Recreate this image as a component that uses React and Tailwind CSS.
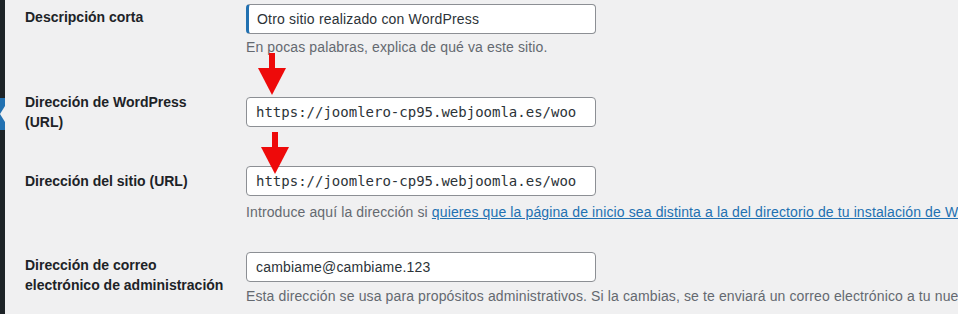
import React from 'react';

const sans = { fontFamily: '"Liberation Sans", Arial, sans-serif' };

const Arrow = ({ className }) => (
  <div className={`absolute flex flex-col items-center ${className}`}>
    <div className="w-[6px] h-[15px] bg-[#ee0a0a]" />
    <svg width="28" height="27" viewBox="0 0 28 27" className="block">
      <polygon points="0,0 28,0 14,27" fill="#ee0a0a" />
    </svg>
  </div>
);

const TextInput = ({ value, mono, focused }) => (
  <div
    className={`w-[350px] h-[30px] bg-white rounded-[4px] border border-[#8c8f94] flex items-center px-[9px] text-[#2c3338] whitespace-nowrap overflow-hidden ${
      focused ? 'border-l-[3px] border-l-[#2271b1] pl-[8px]' : ''
    } ${mono ? 'font-["DejaVu_Sans_Mono",monospace] text-[14px]' : 'text-[14px] tracking-[0.18px]'}`}
  >
    {value}
  </div>
);

const Desc = ({ children, className = 'mt-[4px]' }) => (
  <p className={`${className} text-[14px] tracking-[0.12px] leading-[20px] text-[#646970] whitespace-nowrap`}>{children}</p>
);

export default function App() {
  return (
    <div className="relative w-[958px] h-[314px] overflow-hidden bg-[#f0f0f1] flex" style={sans}>
      {/* admin menu edge */}
      <div className="w-[5px] flex flex-col shrink-0">
        <div className="h-[98px] bg-[#1d2327]" />
        <div className="relative h-[32px] bg-[#2271b1]">
          <div className="absolute right-0 top-[8px] w-0 h-0 border-y-[8px] border-y-transparent border-r-[5px] border-r-[#f0f0f1]" />
        </div>
        <div className="flex-1 bg-[#1d2327]" />
      </div>

      <div className="pl-[20px] flex flex-col">
        {/* Descripción corta */}
        <div className="flex pt-[4px]">
          <label className="w-[221px] mt-[3px] text-[14px] leading-[20px] font-bold text-[#1d2327]">
            Descripción corta
          </label>
          <div>
            <TextInput value="Otro sitio realizado con WordPress" focused />
            <Desc className="mt-[3px]">En pocas palabras, explica de qué va este sitio.</Desc>
          </div>
        </div>

        {/* Dirección de WordPress */}
        <div className="flex pt-[35px]">
          <label className="w-[221px] text-[14px] leading-[20px] font-bold text-[#1d2327]">
            Dirección de WordPress
            <br />
            (URL)
          </label>
          <div className="mt-[5px]">
            <TextInput value="https://joomlero-cp95.webjoomla.es/woo" mono />
          </div>
        </div>

        {/* Dirección del sitio */}
        <div className="flex pt-[34px]">
          <label className="w-[221px] mt-[5px] text-[14px] leading-[20px] font-bold text-[#1d2327]">
            Dirección del sitio (URL)
          </label>
          <div>
            <TextInput value="https://joomlero-cp95.webjoomla.es/woo" mono />
            <Desc className="mt-[6px]">
              Introduce aquí la dirección si{' '}
              <a href="#" className="text-[#2271b1] underline">
                quieres que la página de inicio sea distinta a la del directorio de tu instalación de WordPress
              </a>
              .
            </Desc>
          </div>
        </div>

        {/* Correo de administración */}
        <div className="flex pt-[30px]">
          <label className="w-[221px] mt-[3px] text-[14px] leading-[20px] font-bold text-[#1d2327]">
            Dirección de correo
            <br />
            electrónico de administración
          </label>
          <div>
            <TextInput value="cambiame@cambiame.123" />
            <Desc>
              Esta dirección se usa para propósitos administrativos. Si la cambias, se te enviará un correo electrónico a tu nueva dirección para confirmarla.
            </Desc>
          </div>
        </div>
      </div>

      <Arrow className="left-[258px] top-[53px]" />
      <Arrow className="left-[261px] top-[132px]" />
    </div>
  );
}
